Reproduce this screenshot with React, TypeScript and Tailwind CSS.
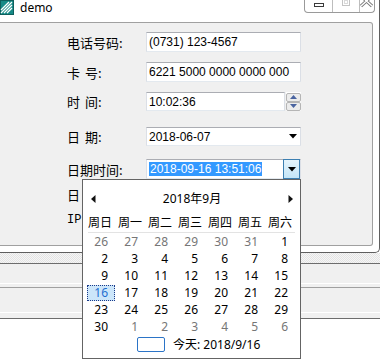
import React from 'react';

const labelCls = "w-[79px] text-[13px] leading-none text-black font-['Noto_Sans_CJK_SC',sans-serif]";
const boxCls =
  "h-full flex items-center pl-[2px] bg-white border border-t-[#abadb3] border-l-[#dbdfe6] border-r-[#dbdfe6] border-b-[#e3e9ef] text-[12px] leading-none text-black font-['Liberation_Sans',sans-serif]";

type Day = { n: number; muted?: boolean; selected?: boolean };

const weeks: Day[][] = [
  [26, 27, 28, 29, 30, 31].map(n => ({ n, muted: true })).concat([{ n: 1 }]),
  [2, 3, 4, 5, 6, 7, 8].map(n => ({ n })),
  [9, 10, 11, 12, 13, 14, 15].map(n => ({ n })),
  [16, 17, 18, 19, 20, 21, 22].map(n => ({ n, selected: n === 16 })),
  [23, 24, 25, 26, 27, 28, 29].map(n => ({ n })),
  [{ n: 30 } as Day].concat([1, 2, 3, 4, 5, 6].map(n => ({ n, muted: true }))),
];

const weekdays = ['周日', '周一', '周二', '周三', '周四', '周五', '周六'];

// two-character label with the wide gap the dialog uses ("卡 号:")
const SpacedLabel = ({ a, b }: { a: string; b: string }) => (
  <span className={labelCls}>
    {a}
    <span className="ml-[5px]">{b}:</span>
  </span>
);

const AppIcon = () => (
  <svg width="14" height="15" viewBox="0 0 14 15" className="shrink-0">
    <rect x="0.5" y="0.5" width="13" height="14" fill="#168a86" stroke="#0d5f5c" />
    <path d="M1 13 L12 2 M1 10 L9 2 M4 13 L12 5 M7 13 L12 8" stroke="#fff" strokeWidth="1.3" />
  </svg>
);

const CaptionButtons = () => (
  <div className="ml-auto mr-[4px] flex h-[13px] border border-t-0 border-[#9a9a9a] rounded-b-[4px] bg-white overflow-hidden">
    <div className="w-[28px] flex justify-center border-r border-[#bdbdbd]">
      <svg width="12" height="8" viewBox="0 0 12 8">
        <rect x="1.5" y="3.5" width="9" height="3" fill="#fff" stroke="#3a3a3a" />
      </svg>
    </div>
    <div className="w-[27px] flex justify-center border-r border-[#bdbdbd]">
      <svg width="10" height="8" viewBox="0 0 10 8">
        <rect x="1.5" y="-2.5" width="7" height="8" fill="none" stroke="#c4c4c4" />
        <rect x="3.5" y="0.5" width="3" height="3" fill="none" stroke="#dadada" />
      </svg>
    </div>
    <div className="flex-1 flex justify-center">
      <svg width="14" height="8" viewBox="0 0 14 8">
        <path d="M1 -4 L12 6 M12 -4 L1 6" stroke="#7a7a7a" strokeWidth="3.2" />
        <path d="M1 -4 L12 6 M12 -4 L1 6" stroke="#fff" strokeWidth="1.4" />
      </svg>
    </div>
  </div>
);

const DownArrow = () => (
  <svg width="8" height="5" viewBox="0 0 8 5">
    <path d="M0 0 H8 L4 4.5 Z" fill="#000" />
  </svg>
);

const Calendar = () => (
  <div className="absolute left-[82px] top-[179px] w-[219px] h-[180px] bg-white border border-[#646464] font-['Noto_Sans','Noto_Sans_CJK_SC',sans-serif] text-[12px] leading-none text-black">
    <div className="mt-[9px] h-[20px] flex items-center justify-between pl-[8px] pr-[7px]">
      <svg width="5" height="8" viewBox="0 0 5 8">
        <path d="M4.5 0 V8 L0 4 Z" fill="#111" />
      </svg>
      <span className="text-[12px]">2018年9月</span>
      <svg width="5" height="8" viewBox="0 0 5 8">
        <path d="M0.5 0 V8 L5 4 Z" fill="#111" />
      </svg>
    </div>
    <div className="mt-[5px] ml-[2px] w-[210px] grid grid-cols-7 h-[18px] items-center">
      {weekdays.map(w => (
        <span key={w} className="text-center">{w}</span>
      ))}
    </div>
    <div className="mx-[5px] border-b border-[#e3e3e3]" />
    <div className="ml-[2px] w-[210px]">
      {weeks.map((week, i) => (
        <div key={i} className="grid grid-cols-7 h-[17px]">
          {week.map((d, j) =>
            d.selected ? (
              <div key={j} className="flex items-start">
                <div className="ml-[2px] mt-[1px] w-[28px] h-[16px] flex items-center justify-end pr-[6px] bg-[#cce6fa] border border-dotted border-[#1b3a8a] text-[#1f6fd1]">
                  {d.n}
                </div>
              </div>
            ) : (
              <div
                key={j}
                className={`flex items-center justify-end pr-[7px] ${d.muted ? 'text-[#767676]' : 'text-black'}`}
              >
                {d.n}
              </div>
            )
          )}
        </div>
      ))}
    </div>
    <div className="mt-[1px] h-[17px] flex items-center pl-[54px] gap-[8px]">
      <div className="w-[28px] h-[15px] border border-[#2b74c7] rounded-[2px]" />
      <span>今天: 2018/9/16</span>
    </div>
  </div>
);

const App: React.FC = () => {
  return (
    <div className="relative w-[380px] h-[363px] overflow-hidden bg-white">
      <div className="w-[380px] h-[253px] flex flex-col border-r border-b border-[#5f5f5f] rounded-br-[5px] bg-white">
        <div className="h-[22px] flex items-start">
          <AppIcon />
          <span className="ml-[6px] mt-[2px] text-[12px] leading-[12px] text-black font-['Noto_Sans',sans-serif]">demo</span>
          <CaptionButtons />
        </div>
        <div className="w-[373px] h-[224px] bg-[#f0f0f0] border-t border-r border-b border-[#a0a0a0] rounded-tr-[3px] rounded-br-[3px] pl-[67px] flex flex-col">
          <div className="flex items-center h-[20px] mt-[9px]">
            <span className={labelCls}>电话号码:</span>
            <div className={`${boxCls} w-[155px]`}>(0731) 123-4567</div>
          </div>
          <div className="flex items-center h-[20px] mt-[10px]">
            <SpacedLabel a="卡" b="号" />
            <div className={`${boxCls} w-[155px]`}>6221 5000 0000 0000 000</div>
          </div>
          <div className="flex items-center h-[19px] mt-[10px]">
            <SpacedLabel a="时" b="间" />
            <div className={`${boxCls} w-[139px]`}>10:02:36</div>
            <div className="ml-[1px] w-[15px] h-full flex flex-col justify-center bg-white">
              <div className="h-[9px] flex items-center justify-center border border-[#b5b5b5] rounded-[2px] bg-[#ececec]">
                <svg width="7" height="4" viewBox="0 0 7 4"><path d="M0 4 H7 L3.5 0 Z" fill="#4a64a0" /></svg>
              </div>
              <div className="h-[9px] flex items-center justify-center border border-[#b5b5b5] rounded-[2px] bg-[#ececec]">
                <svg width="7" height="4" viewBox="0 0 7 4"><path d="M0 0 H7 L3.5 4 Z" fill="#4a64a0" /></svg>
              </div>
            </div>
          </div>
          <div className="flex items-center h-[19px] mt-[16px]">
            <SpacedLabel a="日" b="期" />
            <div className={`${boxCls} w-[155px] justify-between pr-[3px]`}>
              <span>2018-06-07</span>
              <DownArrow />
            </div>
          </div>
          <div className="flex items-center h-[20px] mt-[13px]">
            <span className={labelCls}>日期时间:</span>
            <div className={`${boxCls} w-[155px] pr-0 border-t-[#8a9fb6]`}>
              <span className="bg-[#3399ff] text-white px-[1px] py-[1px] leading-[12px]">2018-09-16 13:51:06</span>
              <div className="ml-auto w-[17px] h-[calc(100%+2px)] -my-[1px] flex items-center justify-center border border-[#3c7fb1] bg-[linear-gradient(#e5f4fc,#c4e5f6)]">
                <DownArrow />
              </div>
            </div>
          </div>
          <div className="flex items-center h-[20px] mt-[5px]">
            <SpacedLabel a="日" b="期" />
            <div className={`${boxCls} w-[155px]`} />
          </div>
          <div className="flex items-center h-[20px] mt-[6px]">
            <span className="w-[79px] text-[12px] leading-none text-black font-['Liberation_Mono',monospace]">IP:</span>
            <div className={`${boxCls} w-[155px]`} />
          </div>
        </div>
      </div>
      <div className="h-[10px] bg-[image:repeating-conic-gradient(#e4e4e4_0%_25%,#f6f6f6_0%_50%)] bg-[length:2px_2px]" />
      <div className="border-t border-b border-[#6d6d6d] bg-[#f0f0f0]">
        <div className="h-[19px]" />
        <div className="h-[1px] bg-white" />
        <div className="h-[3px]" />
        <div className="h-[1px] bg-[#a0a0a0]" />
        <div className="h-[24px]" />
        <div className="h-[1px] bg-white" />
        <div className="h-[5px]" />
      </div>
      <Calendar />
    </div>
  );
};

export default App;
